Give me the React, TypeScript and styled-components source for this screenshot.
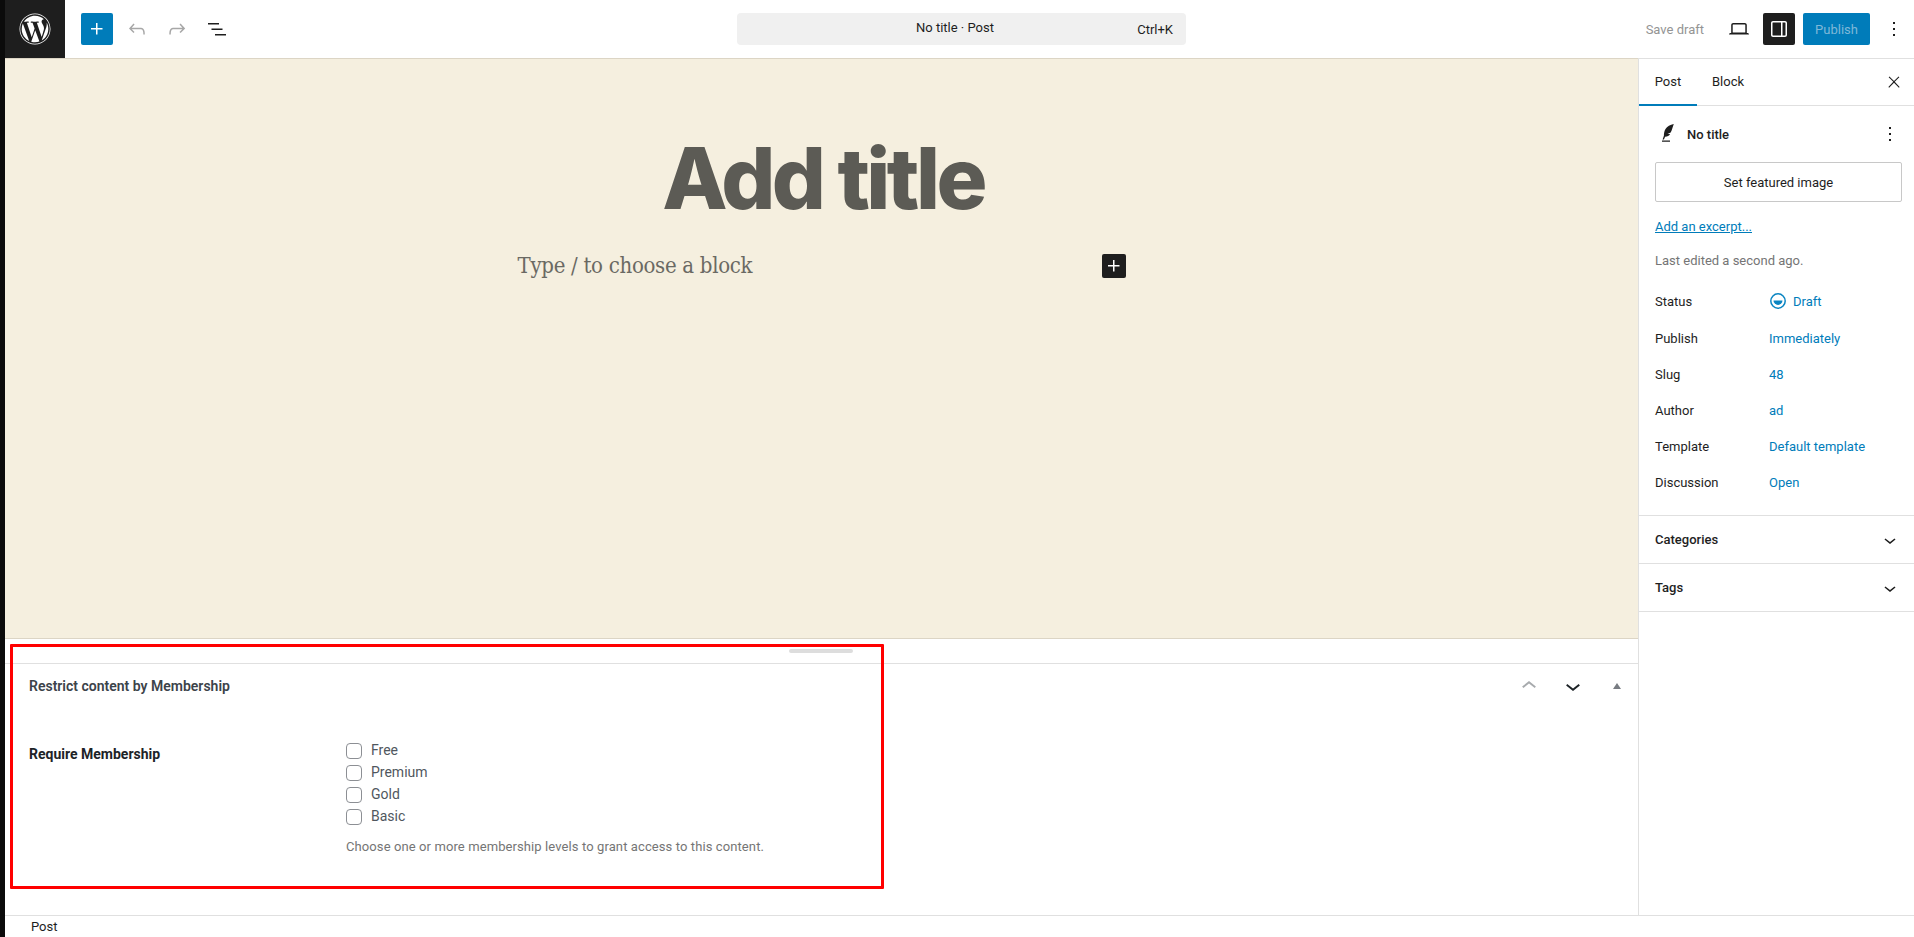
import React from 'react';
import styled, { createGlobalStyle } from 'styled-components';
import { FaWordpress } from 'react-icons/fa';

const GlobalStyle = createGlobalStyle`
  html, body {
    margin: 0;
    padding: 0;
    height: 100%;
    overflow: hidden;
    background: #fff;
    font-family: Roboto, "Liberation Sans", sans-serif;
    font-size: 13px;
    color: #1e1e1e;
  }
  * { box-sizing: border-box; }
`;

const Icon = ({ d, size = 24, color = 'currentColor' }: { d: string; size?: number; color?: string }) => (
  <svg width={size} height={size} viewBox="0 0 24 24" fill={color} fillRule="evenodd" style={{ display: 'block' }}>
    <path d={d} />
  </svg>
);

const ICONS = {
  plus: 'M11 12.5V17.5H12.5V12.5H17.5V11H12.5V6H11V11H6V12.5H11Z',
  undo: 'M18.3 11.7c-.6-.6-1.4-.9-2.3-.9H6.7l2.9-3.3-1.1-1-4.5 5L8.5 16l1-1-2.7-2.7H16c.5 0 .9.2 1.3.5 1 1 1 3.4 1 4.5v.3h1.5v-.2c0-1.5 0-4.3-1.5-5.7z',
  redo: 'M15.6 6.5l-1.1 1 2.9 3.3H8c-.9 0-1.7.3-2.3.9-1.4 1.5-1.4 4.2-1.4 5.6v.2h1.5v-.3c0-1.1 0-3.5 1-4.5.3-.3.7-.5 1.3-.5h9.2L14.5 15l1.1 1.1 4.6-4.6-4.6-5z',
  listView: 'M3 6h11v1.5H3V6Zm3.5 5.5h11V13h-11v-1.5ZM21 17H10v1.5h11V17Z',
  laptop: 'M20.5 16h-.7V8c0-1.1-.9-2-2-2H6.2c-1.1 0-2 .9-2 2v8h-.7c-.8 0-1.5.7-1.5 1.5h20c0-.8-.7-1.5-1.5-1.5zM5.7 8c0-.3.2-.5.5-.5h11.6c.3 0 .5.2.5.5v7.6H5.7V8z',
  drawer: 'M18 4H6c-1.1 0-2 .9-2 2v12c0 1.1.9 2 2 2h12c1.1 0 2-.9 2-2V6c0-1.1-.9-2-2-2zm-4 14.5H6c-.3 0-.5-.2-.5-.5V6c0-.3.2-.5.5-.5h8v13zm4.5-.5c0 .3-.2.5-.5.5h-2.5v-13H18c.3 0 .5.2.5.5v12z',
  more: 'M13 19h-2v-2h2v2zm0-6h-2v-2h2v2zm0-6h-2V5h2v2z',
  close: 'M13 11.8l6.1-6.3-1-1-6.1 6.2-6.1-6.2-1 1 6.1 6.3-6.5 6.7 1 1 6.5-6.6 6.5 6.6 1-1z',
  chevronDown: 'M17.5 11.6L12 16l-5.5-4.4.9-1.2L12 14l4.5-3.6 1 1.2z',
  chevronUp: 'M6.5 12.4L12 8l5.5 4.4-.9 1.2L12 10l-4.5 3.6-1-1.2z',
  feather: 'M18.8 2c-3.5.8-6.7 2.4-8.3 5-1.2 2-1.6 4.6-1.6 6.8L7.6 17.5h1.3l1.2-2.8c2.3-.1 4-1 5-2.8l-2.6.1 3.2-1.5c1.2-2.3 2-5.3 3.1-8.5zM7 18.6h8v1.2H7z',
};

const META_ROWS = [
  { label: 'Publish', value: 'Immediately' },
  { label: 'Slug', value: '48' },
  { label: 'Author', value: 'ad' },
  { label: 'Template', value: 'Default template' },
  { label: 'Discussion', value: 'Open' },
];

const LEVELS = ['Free', 'Premium', 'Gold', 'Basic'];

export default function App() {
  return (
    <>
      <GlobalStyle />
      <Root>
        <Strip />
        <Main>
          <Header>
            <LogoBox>
              <FaWordpress size={32} color="#fff" />
            </LogoBox>
            <HeaderLeft>
              <PrimaryIconButton>
                <Icon d={ICONS.plus} />
              </PrimaryIconButton>
              <GhostButton $muted>
                <Icon d={ICONS.undo} />
              </GhostButton>
              <GhostButton $muted>
                <Icon d={ICONS.redo} />
              </GhostButton>
              <GhostButton>
                <Icon d={ICONS.listView} />
              </GhostButton>
            </HeaderLeft>
            <CommandBar>
              <CommandTitle>No title · Post</CommandTitle>
              <CommandKey>Ctrl+K</CommandKey>
            </CommandBar>
            <HeaderRight>
              <SaveDraft>Save draft</SaveDraft>
              <GhostButton>
                <Icon d={ICONS.laptop} />
              </GhostButton>
              <DarkToggle>
                <Icon d={ICONS.drawer} />
              </DarkToggle>
              <PublishButton>Publish</PublishButton>
              <GhostButton>
                <Icon d={ICONS.more} />
              </GhostButton>
            </HeaderRight>
          </Header>

          <Body>
            <EditorColumn>
              <Canvas>
                <PostTitle>Add title</PostTitle>
                <BlockRow>
                  <BlockPlaceholder>Type / to choose a block</BlockPlaceholder>
                  <InserterButton>
                    <Icon d={ICONS.plus} />
                  </InserterButton>
                </BlockRow>
              </Canvas>

              <MetaArea>
                <ResizeBar>
                  <ResizeHandle />
                </ResizeBar>
                <MetaHeader>
                  <MetaTitle>Restrict content by Membership</MetaTitle>
                  <MetaControls>
                    <MetaControl $color="#a7aaad">
                      <Icon d={ICONS.chevronUp} size={30} />
                    </MetaControl>
                    <MetaControl $color="#1d2327">
                      <Icon d={ICONS.chevronDown} size={30} />
                    </MetaControl>
                    <MetaControl $color="#787c82">
                      <svg width="8" height="6" viewBox="0 0 8 6" fill="currentColor">
                        <path d="M4 0l4 6H0z" />
                      </svg>
                    </MetaControl>
                  </MetaControls>
                </MetaHeader>
                <MetaBody>
                  <RequireLabel>Require Membership</RequireLabel>
                  <Levels>
                    {LEVELS.map((level) => (
                      <LevelRow key={level}>
                        <CheckBox />
                        <LevelName>{level}</LevelName>
                      </LevelRow>
                    ))}
                    <HelpText>Choose one or more membership levels to grant access to this content.</HelpText>
                  </Levels>
                </MetaBody>
                <Highlight />
              </MetaArea>
            </EditorColumn>

            <Sidebar>
              <Tabs>
                <Tab $active>Post</Tab>
                <Tab>Block</Tab>
                <CloseWrap>
                  <Icon d={ICONS.close} size={18} />
                </CloseWrap>
              </Tabs>

              <Summary>
                <PostHead>
                  <PostGlyph>
                    <Icon d={ICONS.feather} />
                  </PostGlyph>
                  <PostName>No title</PostName>
                  <PostMore>
                    <Icon d={ICONS.more} />
                  </PostMore>
                </PostHead>
                <FeaturedButton>Set featured image</FeaturedButton>
                <ExcerptLink>Add an excerpt...</ExcerptLink>
                <LastEdited>Last edited a second ago.</LastEdited>
                <InfoList>
                  <StatusRow>
                    <InfoLabel>Status</InfoLabel>
                    <StatusValue>
                      <svg width="18" height="18" viewBox="0 0 18 18">
                        <circle cx="9" cy="9" r="7.2" fill="none" stroke="#0a85c2" strokeWidth="1.5" />
                        <path d="M4.5 8.4h9a4.5 4.5 0 0 1-9 0z" fill="#0a85c2" />
                      </svg>
                      <InfoValue>Draft</InfoValue>
                    </StatusValue>
                  </StatusRow>
                  {META_ROWS.map((row) => (
                    <InfoRow key={row.label}>
                      <InfoLabel>{row.label}</InfoLabel>
                      <InfoValue>{row.value}</InfoValue>
                    </InfoRow>
                  ))}
                </InfoList>
              </Summary>

              <PanelRow>
                <PanelTitle>Categories</PanelTitle>
                <Icon d={ICONS.chevronDown} />
              </PanelRow>
              <PanelRow>
                <PanelTitle>Tags</PanelTitle>
                <Icon d={ICONS.chevronDown} />
              </PanelRow>
            </Sidebar>
          </Body>

          <Footer>Post</Footer>
        </Main>
      </Root>
    </>
  );
}

const Root = styled.div`
  display: flex;
  width: 1914px;
  height: 937px;
  overflow: hidden;
`;

const Strip = styled.div`
  width: 5px;
  flex: none;
  background: #0b0b0b;
`;

const Main = styled.div`
  flex: 1;
  min-width: 0;
  display: flex;
  flex-direction: column;
  background: #fff;
`;

const Header = styled.header`
  height: 58px;
  flex: none;
  display: flex;
  align-items: center;
  background: #fff;
`;

const LogoBox = styled.div`
  width: 60px;
  height: 58px;
  flex: none;
  display: flex;
  align-items: center;
  justify-content: center;
  background: #1e1e1e;
`;

const HeaderLeft = styled.div`
  display: flex;
  align-items: center;
  gap: 8px;
  margin-left: 16px;
  width: 656px;
`;

const PrimaryIconButton = styled.div`
  width: 32px;
  height: 32px;
  display: flex;
  align-items: center;
  justify-content: center;
  background: #007cba;
  color: #fff;
  border-radius: 2px;
`;

const GhostButton = styled.div<{ $muted?: boolean }>`
  width: 32px;
  height: 32px;
  display: flex;
  align-items: center;
  justify-content: center;
  color: ${(p) => (p.$muted ? '#a7a7a7' : '#1e1e1e')};
`;

const CommandBar = styled.div`
  width: 449px;
  height: 32px;
  flex: none;
  display: flex;
  align-items: center;
  justify-content: flex-end;
  position: relative;
  padding-right: 13px;
  background: #f0f0f0;
  border-radius: 4px;
`;

const CommandTitle = styled.span`
  position: absolute;
  left: 179px;
  top: 7px;
  line-height: 16px;
  font-size: 13px;
  color: #1e1e1e;
`;

const CommandKey = styled.span`
  font-size: 13px;
  color: #1e1e1e;
`;

const HeaderRight = styled.div`
  margin-left: auto;
  padding-right: 4px;
  display: flex;
  align-items: center;
`;

const SaveDraft = styled.span`
  font-size: 13px;
  color: #949494;
  margin-right: 19px;
`;

const DarkToggle = styled.div`
  width: 32px;
  height: 32px;
  margin-left: 8px;
  display: flex;
  align-items: center;
  justify-content: center;
  color: #fff;
  background: #1e1e1e;
  border-radius: 2px;
`;

const PublishButton = styled.div`
  width: 67px;
  height: 32px;
  margin: 0 8px;
  display: flex;
  align-items: center;
  justify-content: center;
  font-size: 13px;
  color: #7eb8d8;
  background: #007cba;
  border-radius: 2px;
`;

const Body = styled.div`
  flex: 1;
  min-height: 0;
  display: flex;
`;

const EditorColumn = styled.div`
  flex: 1;
  min-width: 0;
  display: flex;
  flex-direction: column;
`;

const Canvas = styled.div`
  height: 581px;
  flex: none;
  display: flex;
  flex-direction: column;
  align-items: center;
  padding-top: 74px;
  background: #f5efdf;
  border-top: 1px solid #dcd5c5;
  border-bottom: 1px solid #dcd5c5;
`;

const PostTitle = styled.h1`
  margin: 0 0 0 3px;
  font-family: Inter, "Liberation Sans", sans-serif;
  font-size: 85px;
  font-weight: 800;
  line-height: 92px;
  letter-spacing: -3.6px;
  color: #5c5b55;
`;

const BlockRow = styled.div`
  width: 608px;
  margin-top: 25px;
  display: flex;
  align-items: center;
  justify-content: space-between;
`;

const BlockPlaceholder = styled.p`
  margin: 0;
  font-family: "DejaVu Serif Condensed", "DejaVu Serif", serif;
  font-stretch: condensed;
  font-size: 22px;
  line-height: 32px;
  letter-spacing: -0.3px;
  color: #6a6963;
`;

const InserterButton = styled.div`
  width: 24px;
  height: 24px;
  display: flex;
  align-items: center;
  justify-content: center;
  color: #fff;
  background: #1e1e1e;
  border-radius: 2px;
`;

const MetaArea = styled.div`
  flex: 1;
  position: relative;
`;

const ResizeBar = styled.div`
  height: 25px;
  display: flex;
  justify-content: center;
  padding: 10px 0 0 0;
  border-bottom: 1px solid #e0e0e0;
`;

const ResizeHandle = styled.div`
  width: 64px;
  height: 4px;
  border-radius: 2px;
  background: #ddd;
  margin-left: -1px;
`;

const MetaHeader = styled.div`
  height: 44px;
  display: flex;
  align-items: center;
  justify-content: space-between;
  padding-left: 24px;
`;

const MetaTitle = styled.h2`
  margin: 0;
  font-size: 14px;
  font-weight: 600;
  color: #3c434a;
`;

const MetaControls = styled.div`
  display: flex;
  align-items: center;
  gap: 8px;
  margin-right: 3px;
`;

const MetaControl = styled.div<{ $color: string }>`
  width: 36px;
  height: 36px;
  display: flex;
  align-items: center;
  justify-content: center;
  color: ${(p) => p.$color};
`;

const MetaBody = styled.div`
  display: grid;
  grid-template-columns: 317px 1fr;
  padding: 32px 0 0 24px;
`;

const RequireLabel = styled.div`
  font-size: 14px;
  font-weight: 700;
  line-height: 18px;
  padding-top: 5px;
  color: #1d2327;
`;

const Levels = styled.div`
  display: flex;
  flex-direction: column;
`;

const LevelRow = styled.label`
  height: 22px;
  display: flex;
  align-items: center;
  gap: 9px;
`;

const CheckBox = styled.span`
  width: 16px;
  height: 16px;
  border: 1px solid #8c8f94;
  border-radius: 4px;
  background: #fff;
`;

const LevelName = styled.span`
  font-size: 14px;
  color: #50575e;
  margin-top: -2px;
`;

const HelpText = styled.p`
  margin: 10px 0 0;
  font-size: 13px;
  line-height: 18px;
  letter-spacing: 0.1px;
  color: #757575;
`;

const Highlight = styled.div`
  position: absolute;
  left: 5px;
  top: 5px;
  width: 874px;
  height: 245px;
  border: 3px solid #f00;
  border-radius: 1px;
  pointer-events: none;
`;

const Sidebar = styled.aside`
  width: 276px;
  flex: none;
  background: #fff;
  border-top: 1px solid #e0e0e0;
  border-left: 1px solid #e0e0e0;
`;

const Tabs = styled.div`
  height: 47px;
  display: flex;
  align-items: stretch;
  border-bottom: 1px solid #e0e0e0;
`;

const Tab = styled.div<{ $active?: boolean }>`
  width: 58px;
  padding-left: ${(p) => (p.$active ? '0' : '4px')};
  display: flex;
  align-items: center;
  justify-content: center;
  font-size: 13px;
  color: #1e1e1e;
  margin-bottom: -1px;
  border-bottom: 2px solid ${(p) => (p.$active ? '#007cba' : 'transparent')};
`;

const CloseWrap = styled.div`
  margin-left: auto;
  margin-right: 11px;
  display: flex;
  align-items: center;
`;

const Summary = styled.div`
  padding: 16px 12px 15px 16px;
  border-bottom: 1px solid #e0e0e0;
`;

const PostHead = styled.div`
  height: 24px;
  display: flex;
  align-items: center;
  position: relative;
`;

const PostGlyph = styled.div`
  width: 24px;
  margin-right: 8px;
`;

const PostName = styled.span`
  font-size: 13px;
  font-weight: 500;
`;

const PostMore = styled.div`
  margin-left: auto;
  margin-right: 0;
`;

const FeaturedButton = styled.div`
  height: 40px;
  margin-top: 16px;
  width: 247px;
  display: flex;
  align-items: center;
  justify-content: center;
  font-size: 13px;
  color: #1e1e1e;
  border: 1px solid #c8c8c8;
  border-radius: 2px;
`;

const ExcerptLink = styled.a`
  display: block;
  margin-top: 16px;
  font-size: 13px;
  line-height: 18px;
  color: #007cba;
  text-decoration: underline;
`;

const LastEdited = styled.div`
  margin-top: 16px;
  font-size: 13px;
  line-height: 18px;
  color: #757575;
`;

const InfoList = styled.div`
  margin-top: 13px;
`;

const InfoRow = styled.div`
  height: 36px;
  display: flex;
  align-items: center;
`;

const StatusRow = styled(InfoRow)`
  margin-bottom: 1px;
`;

const InfoLabel = styled.span`
  width: 114px;
  flex: none;
  font-size: 13px;
  color: #1e1e1e;
`;

const InfoValue = styled.span`
  font-size: 13px;
  color: #007cba;
`;

const StatusValue = styled.div`
  display: flex;
  align-items: center;
  gap: 6px;
`;

const PanelRow = styled.div`
  height: 48px;
  display: flex;
  align-items: center;
  justify-content: space-between;
  padding: 0 12px 0 16px;
  border-bottom: 1px solid #e0e0e0;
`;

const PanelTitle = styled.h3`
  margin: 0;
  font-size: 13px;
  font-weight: 500;
  color: #1e1e1e;
`;

const Footer = styled.footer`
  height: 22px;
  flex: none;
  padding-left: 26px;
  font-size: 13px;
  line-height: 22px;
  color: #1e1e1e;
  background: #fff;
  border-top: 1px solid #e0e0e0;
`;
